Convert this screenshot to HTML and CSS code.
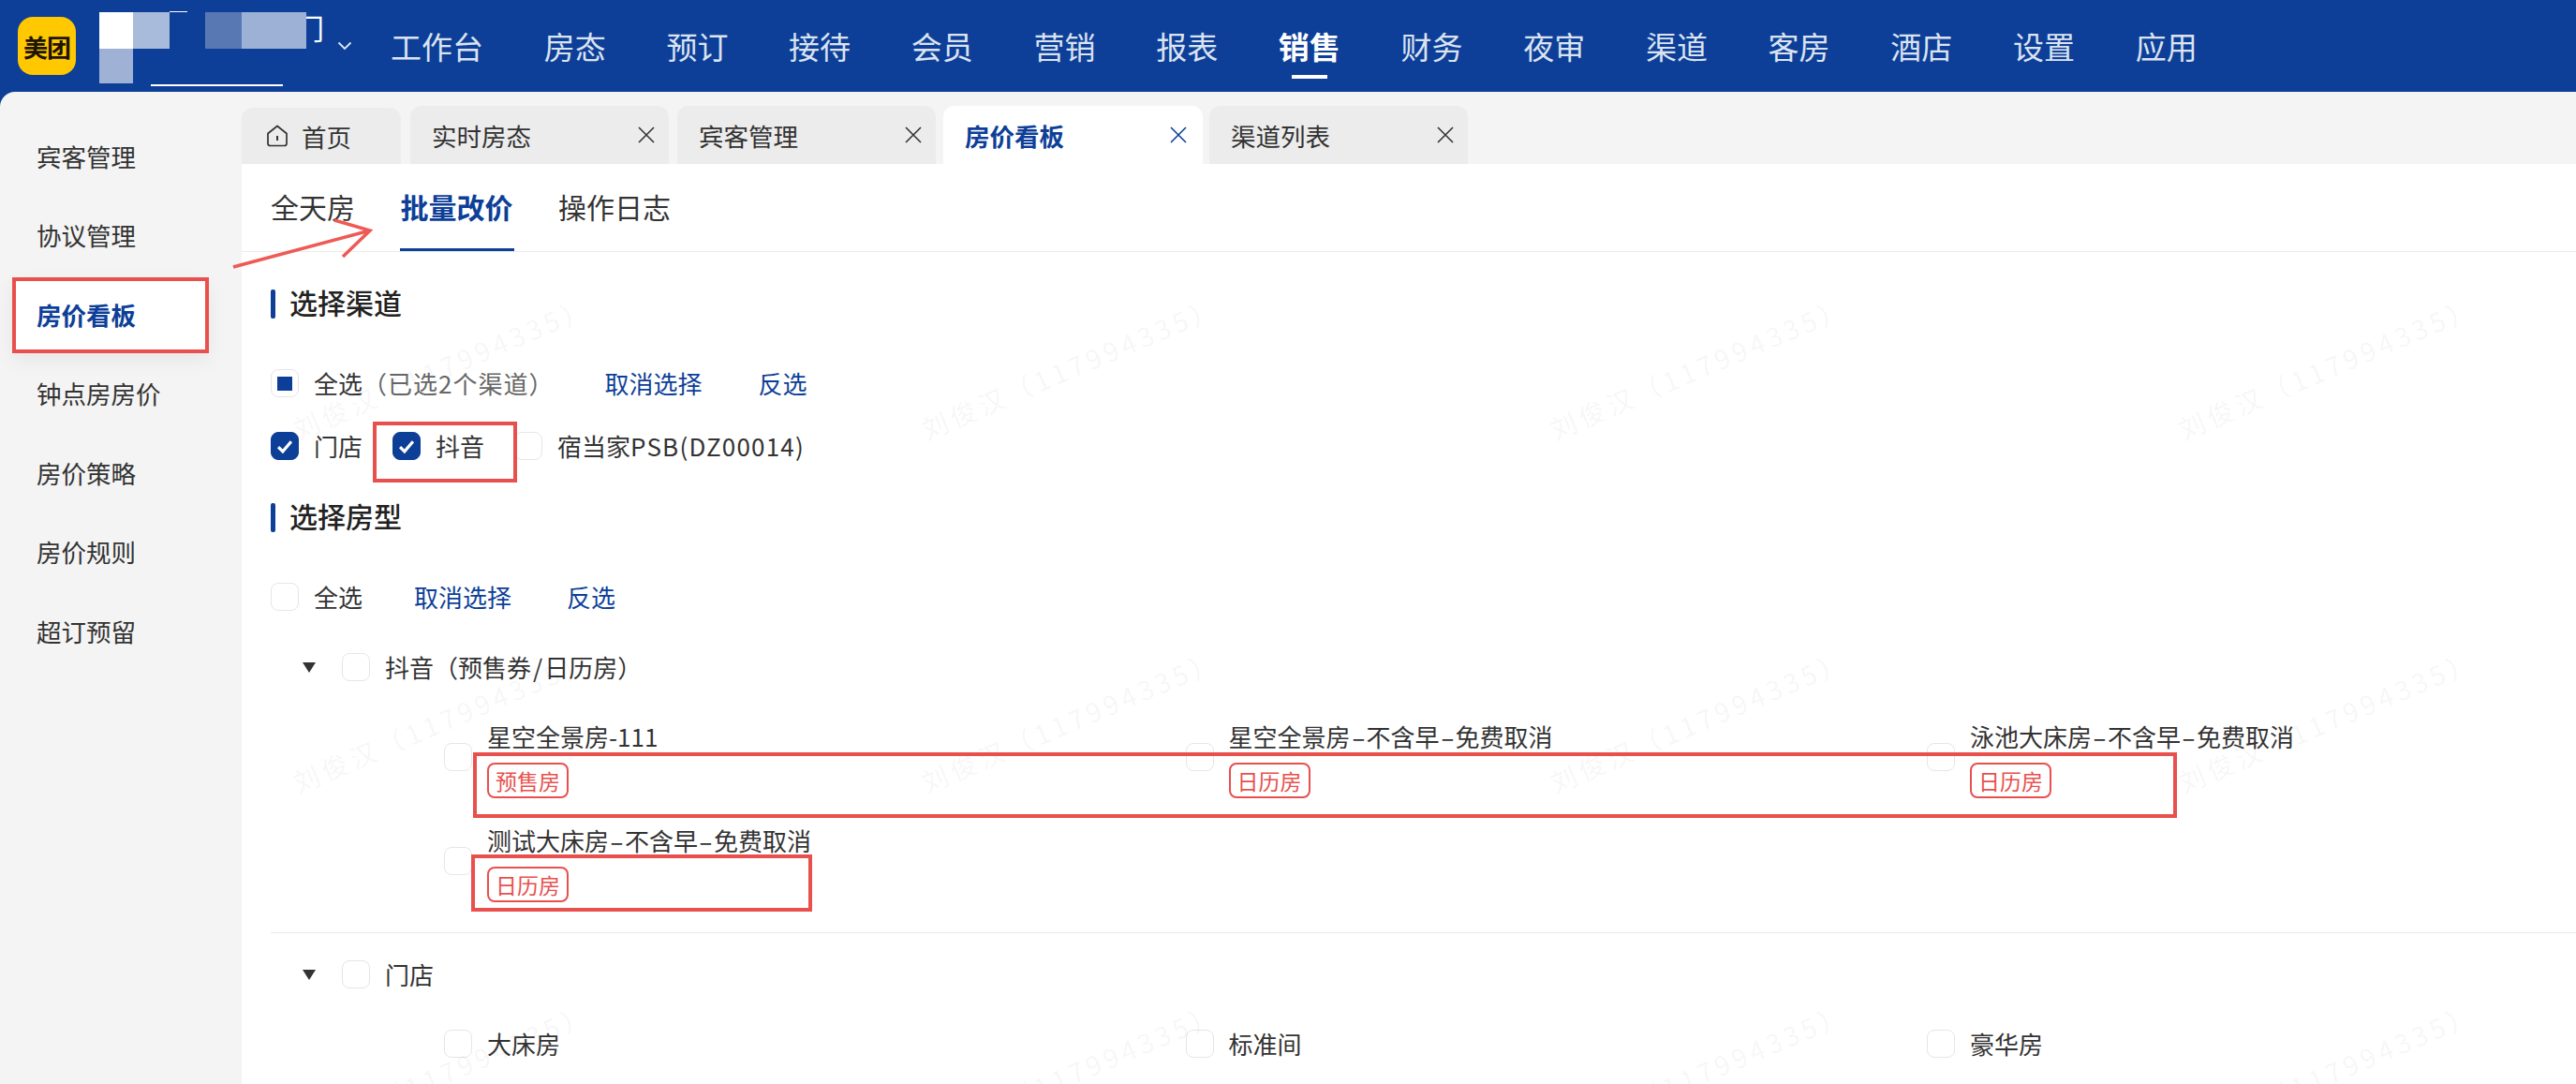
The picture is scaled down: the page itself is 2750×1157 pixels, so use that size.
FILE: index.html
```html
<!DOCTYPE html>
<html lang="zh-CN">
<head>
<meta charset="utf-8">
<title>房价看板</title>
<link rel="stylesheet" href="styles.css">
</head>
<body>
<div class="page">
  <header class="topbar">
    <div class="logo">美团</div>
    <div class="account">
      <span class="account-name">门</span>
      <i class="tile tile-a"></i><i class="tile tile-b"></i><i class="tile tile-c"></i><i class="tile tile-d"></i><i class="tile tile-e"></i>
      <i class="acc-line acc-line-top"></i><i class="acc-line acc-line-bottom"></i>
      <svg class="chevron" width="16" height="10" viewBox="0 0 16 10"><path d="M1.500 1.500 8 8l6.500-6.500" fill="none" stroke="#dfe6f3" stroke-width="1.800"/></svg>
    </div>
    <nav class="nav">
      <a>工作台</a><a>房态</a><a>预订</a><a>接待</a><a>会员</a><a>营销</a><a>报表</a><a class="on">销售</a><a>财务</a><a>夜审</a><a>渠道</a><a>客房</a><a>酒店</a><a>设置</a><a>应用</a>
    </nav>
  </header>

  <div class="main">
    <aside class="side">
      <div class="side-item">宾客管理</div>
      <div class="side-item">协议管理</div>
      <div class="side-item side-on"><span>房价看板</span></div>
      <div class="side-item">钟点房房价</div>
      <div class="side-item">房价策略</div>
      <div class="side-item">房价规则</div>
      <div class="side-item">超订预留</div>
    </aside>

    <section class="content">
      <div class="tabs">
        <div class="tab tab-home">
          <svg width="24" height="24" viewBox="0 0 24 24"><path d="M2 9.500 12 1.500l10 8V20a2.500 2.500 0 0 1-2.500 2.500h-15A2.500 2.500 0 0 1 2 20Z" fill="none" stroke="#333" stroke-width="1.700" stroke-linejoin="round"/><path d="M12 12v5" stroke="#333" stroke-width="2"/></svg>
          <span>首页</span>
        </div>
        <div class="tab"><span>实时房态</span><svg class="x" width="18" height="18" viewBox="0 0 18 18"><path d="M1 1l16 16M17 1 1 17"/></svg></div>
        <div class="tab"><span>宾客管理</span><svg class="x" width="18" height="18" viewBox="0 0 18 18"><path d="M1 1l16 16M17 1 1 17"/></svg></div>
        <div class="tab tab-on"><span>房价看板</span><svg class="x" width="18" height="18" viewBox="0 0 18 18"><path d="M1 1l16 16M17 1 1 17"/></svg></div>
        <div class="tab tab-last"><span>渠道列表</span><svg class="x" width="18" height="18" viewBox="0 0 18 18"><path d="M1 1l16 16M17 1 1 17"/></svg></div>
      </div>

      <div class="panel">
        <div class="subtabs">
          <a class="subtab">全天房</a><a class="subtab subtab-on">批量改价</a><a class="subtab">操作日志</a>
        </div>

        <div class="body">
          <h2 class="title title-first">选择渠道</h2>
          <div class="row row-all">
            <span class="cb cb-part"><i></i></span><span class="lbl">全选</span><span class="muted">（已选2个渠道）</span>
            <a class="link link-cancel">取消选择</a><a class="link link-invert">反选</a>
          </div>
          <div class="row row-channels">
            <span class="cb cb-on"><svg width="20" height="17" viewBox="0 0 18 16"><path d="M2.500 8.500 7 13l8.500-10" fill="none" stroke="#fff" stroke-width="3"/></svg></span><span class="lbl">门店</span>
            <span class="cb cb-on chan"><svg width="20" height="17" viewBox="0 0 18 16"><path d="M2.500 8.500 7 13l8.500-10" fill="none" stroke="#fff" stroke-width="3"/></svg></span><span class="lbl">抖音</span>
            <span class="cb chan"></span><span class="lbl">宿当家<span class="latin">PSB(DZ00014)</span></span>
          </div>

          <h2 class="title title-second">选择房型</h2>
          <div class="row row-all">
            <span class="cb"></span><span class="lbl">全选</span>
            <a class="link link-cancel2">取消选择</a><a class="link link-invert2">反选</a>
          </div>

          <div class="row group group-first">
            <i class="tri"></i><span class="cb"></span><span class="lbl lbl-group">抖音（预售券<span class="slash">/</span>日历房）</span>
          </div>
          <div class="items">
            <div class="item"><span class="cb"></span><div><div class="name">星空全景房-111</div><span class="tag">预售房</span></div></div>
            <div class="item"><span class="cb"></span><div><div class="name">星空全景房<span class="hy">-</span>不含早<span class="hy">-</span>免费取消</div><span class="tag">日历房</span></div></div>
            <div class="item"><span class="cb"></span><div><div class="name">泳池大床房<span class="hy">-</span>不含早<span class="hy">-</span>免费取消</div><span class="tag">日历房</span></div></div>
            <div class="item"><span class="cb"></span><div><div class="name">测试大床房<span class="hy">-</span>不含早<span class="hy">-</span>免费取消</div><span class="tag">日历房</span></div></div>
          </div>
          <hr class="divider">
          <div class="row group">
            <i class="tri"></i><span class="cb"></span><span class="lbl lbl-group">门店</span>
          </div>
          <div class="items">
            <div class="item item-plain"><span class="cb"></span><div class="name">大床房</div></div>
            <div class="item item-plain"><span class="cb"></span><div class="name">标准间</div></div>
            <div class="item item-plain"><span class="cb"></span><div class="name">豪华房</div></div>
          </div>
        </div>
      </div>
    </section>
  </div>

  <div class="watermarks">
    <span>刘俊汉（117994335）</span><span>刘俊汉（117994335）</span><span>刘俊汉（117994335）</span><span>刘俊汉（117994335）</span>
    <span>刘俊汉（117994335）</span><span>刘俊汉（117994335）</span><span>刘俊汉（117994335）</span><span>刘俊汉（117994335）</span>
    <span>刘俊汉（117994335）</span><span>刘俊汉（117994335）</span><span>刘俊汉（117994335）</span><span>刘俊汉（117994335）</span>
  </div>

  <i class="mark mark-side"></i>
  <i class="mark mark-douyin"></i>
  <i class="mark mark-row"></i>
  <i class="mark mark-row2"></i>
  <svg class="arrow" width="165" height="65" viewBox="0 0 165 65"><path d="M9 60 155 21M117 10l38 11-29 28" fill="none" stroke="#ee5a55" stroke-width="3.500"/></svg>
</div>
</body>
</html>
```
FILE: styles.css
```css
* { box-sizing: border-box; }
html, body { margin: 0; padding: 0; }
body { font-family: "Noto Sans CJK SC", "Noto Sans", sans-serif; color: #333; }
.page { position: relative; width: 2750px; height: 1157px; overflow: hidden; display: flex; flex-direction: column; background: #0d3f98; }

/* top bar */
.topbar { height: 98px; flex: none; display: flex; align-items: center; padding-left: 19px; }
.logo { width: 62px; height: 62px; flex: none; border-radius: 16px; background: #ffc800; color: #1d1500; font-size: 26px; font-weight: 700; display: flex; align-items: center; justify-content: center; letter-spacing: -1px; }
.account { position: relative; width: 336px; height: 98px; flex: none; }
.account-name { position: absolute; left: 235px; top: 9px; font-size: 30px; line-height: 40px; color: #fff; }
.tile { position: absolute; }
.tile-a { left: 25px; top: 13px; width: 36px; height: 39px; background: #fff; }
.tile-b { left: 61px; top: 13px; width: 39px; height: 39px; background: #a9bbdb; }
.tile-c { left: 25px; top: 52px; width: 36px; height: 37px; background: #9fb2d6; }
.tile-d { left: 138px; top: 13px; width: 39px; height: 39px; background: #5878b3; }
.tile-e { left: 177px; top: 13px; width: 69px; height: 39px; background: #9db0d6; }
.acc-line { position: absolute; background: #fff; }
.acc-line-top { left: 100px; top: 12px; width: 19px; height: 1px; }
.acc-line-bottom { left: 80px; top: 90px; width: 141px; height: 2px; }
.chevron { position: absolute; left: 279px; top: 44px; }
.nav { display: flex; gap: 64.700px; }
.nav a { position: relative; font-size: 33px; line-height: 48px; color: #dbe3f1; white-space: nowrap; }
.nav a.on { color: #fff; font-weight: 700; }
.nav a.on::after { content: ""; position: absolute; left: 14px; right: 14px; top: 55px; height: 4px; background: #fff; }

/* main */
.main { flex: 1; min-height: 0; display: flex; background: #f4f4f4; border-top-left-radius: 16px; }
.side { width: 258px; flex: none; padding-top: 26px; }
.side-item { height: 84.500px; display: flex; align-items: center; padding-left: 39px; font-size: 26.500px; color: #333; }
.side-on { padding-left: 13px; }
.side-on span { width: 210px; height: 81px; margin-top: 3px; display: flex; align-items: center; padding: 0 0 3px 26px; background: #fff; color: #0d3f98; font-weight: 700; box-shadow: 0 8px 20px rgba(0,0,0,.06); }

/* tabs */
.content { flex: 1; min-width: 0; display: flex; flex-direction: column; }
.tabs { height: 77px; flex: none; display: flex; align-items: flex-end; }
.tab { width: 276px; height: 62px; margin-right: 9px; padding: 0 15px 0 23px; display: flex; align-items: center; justify-content: space-between; background: #ececec; border-radius: 12px 12px 0 0; font-size: 26.500px; color: #333; }
.tab-home { width: 170px; height: 60px; margin-right: 10px; padding: 0 0 0 26px; justify-content: flex-start; gap: 14px; }
.tab-on { width: 277px; margin-left: -1px; margin-right: 7px; padding-right: 17px; background: #fff; color: #0d3f98; font-weight: 700; }
.x { flex: none; fill: none; stroke: #333; stroke-width: 1.600; }
.tab-on .x { stroke: #0d3f98; }

/* panel */
.panel { flex: 1; min-height: 0; background: #fff; display: flex; flex-direction: column; }
.subtabs { height: 94px; flex: none; display: flex; gap: 46.500px; padding-left: 30px; border-bottom: 1px solid #ececec; }
.subtab { height: 93px; padding: 0 1px; display: flex; align-items: center; border-bottom: 3px solid transparent; font-size: 30px; color: #333; }
.subtab-on { color: #0d3f98; font-weight: 700; border-bottom-color: #0d3f98; }
.body { padding-left: 31px; }
.title { position: relative; height: 31px; margin: 0; padding-left: 20px; font-size: 30px; line-height: 26px; font-weight: 500; color: #222; }
.title::before { content: ""; position: absolute; left: 0; top: 0; width: 5px; height: 31px; border-radius: 2px; background: #0d3f98; }
.title-first { margin-top: 40px; }
.title-second { margin-top: 46px; }
.row { height: 30px; display: flex; align-items: center; }
.row-all { margin-top: 54px; }
.row-channels { margin-top: 37px; }
.cb { width: 30px; height: 30px; flex: none; display: flex; align-items: center; justify-content: center; border: 1.500px solid #e6e6e6; border-radius: 8px; background: #fff; }
.cb-on { background: #0d3f98; border-color: #0d3f98; }
.cb-part i { width: 16px; height: 15px; background: #0d3f98; }
.lbl { margin-left: 16px; font-size: 26px; line-height: 36px; color: #333; white-space: nowrap; }
.latin { letter-spacing: 1.200px; }
.slash { padding: 0 2px; }
.hy { display: inline-block; padding: 0 4px; transform: scaleX(1.7); }
.chan { margin-left: 32px; }
.muted { font-size: 26px; line-height: 36px; letter-spacing: 1px; color: #666; white-space: nowrap; }
.link { font-size: 26px; line-height: 36px; color: #0d3f98; white-space: nowrap; }
.link-cancel { margin-left: 54px; }
.link-invert { margin-left: 60px; }
.link-cancel2 { margin-left: 55px; }
.link-invert2 { margin-left: 59px; }

/* groups */
.group { padding-left: 34px; }
.group-first { margin-top: 45px; }
.tri { width: 0; height: 0; flex: none; margin-right: 28px; border-left: 7px solid transparent; border-right: 7px solid transparent; border-top: 11px solid #333; }
.lbl-group { margin-left: 16px; }
.items { display: grid; grid-template-columns: repeat(3, 791.500px); row-gap: 29px; margin-top: 43px; padding-left: 185px; }
.item { display: flex; align-items: center; gap: 16px; }
.item > .cb { margin-bottom: 6px; }
.item-plain > .cb { margin-bottom: 0; }
.name { font-size: 26px; line-height: 32px; color: #333; white-space: nowrap; }
.tag { display: flex; align-items: center; justify-content: center; width: 87px; height: 38px; margin-top: 12px; border: 2px solid #e8504d; border-radius: 8px; font-size: 23px; line-height: 30px; color: #e8504d; }
.divider { height: 1px; margin: 32px 0 29px; border: 0; background: #e8e8e8; }

/* watermark layer */
.watermarks { position: absolute; left: 136px; top: 203px; display: grid; grid-template-columns: repeat(4, 671px); grid-auto-rows: 377px; pointer-events: none; }
.watermarks span { display: flex; align-items: center; justify-content: center; transform: rotate(-23deg); font-size: 28px; letter-spacing: 4.500px; color: rgba(0, 0, 0, .055); white-space: nowrap; }

/* red annotations */
.mark { position: absolute; border: 4px solid #e8504d; }
.mark-side { left: 13px; top: 296px; width: 210px; height: 81px; }
.mark-douyin { left: 398px; top: 450px; width: 154px; height: 65px; }
.mark-row { left: 505px; top: 803px; width: 1819px; height: 70px; }
.mark-row2 { left: 503px; top: 912px; width: 364px; height: 61px; }
.arrow { position: absolute; left: 240px; top: 225px; }
```
